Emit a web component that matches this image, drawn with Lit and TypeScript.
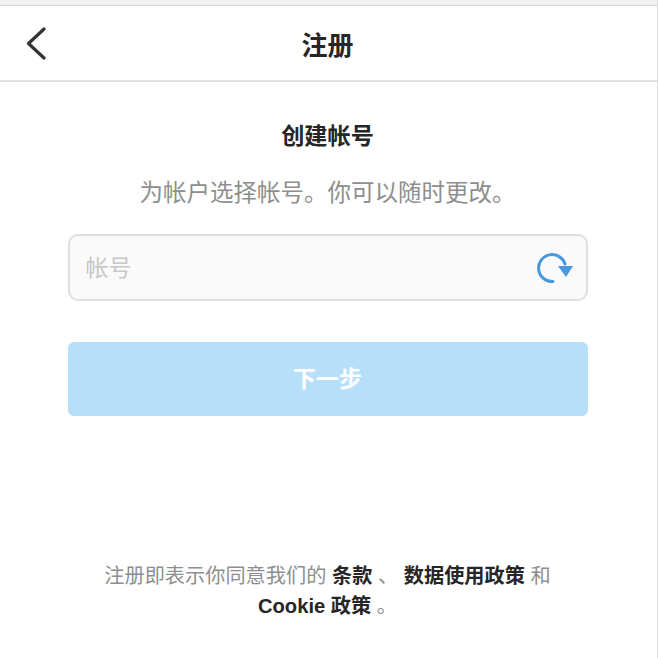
import { LitElement, html, css } from "lit";
import { customElement } from "lit/decorators.js";

@customElement("app-root")
export class AppRoot extends LitElement {
  static styles = css`
    :host {
      display: block;
      width: 658px;
      height: 658px;
      box-sizing: border-box;
      overflow: hidden;
      background: #fff;
      border-right: 1px solid #dedede;
      font-family: "Liberation Sans", "Noto Sans CJK SC", sans-serif;
    }

    .chrome {
      height: 5px;
      background: #f1f1f1;
      border-bottom: 1px solid #d8d8d8;
    }

    .header {
      display: flex;
      align-items: center;
      justify-content: center;
      height: 74px;
      padding-right: 2px;
      border-bottom: 2px solid #e0e0e0;
      position: relative;
    }

    .back {
      position: absolute;
      left: 26px;
      top: 20px;
      width: 20px;
      height: 34px;
    }

    .header h1 {
      margin: 0;
      padding-top: 5px;
      font-size: 26px;
      font-weight: 700;
      color: #262626;
      line-height: 32px;
    }

    .main {
      display: flex;
      flex-direction: column;
      align-items: center;
      padding: 39px 69.5px 0 67.5px;
    }

    .main h2 {
      margin: 0;
      font-size: 23.2px;
      font-weight: 700;
      line-height: 30px;
      color: #262626;
    }

    .hint {
      margin: 27px 0 0;
      font-size: 23.5px;
      line-height: 30px;
      color: #8e8e8e;
    }

    .field {
      align-self: stretch;
      display: flex;
      align-items: center;
      justify-content: space-between;
      box-sizing: border-box;
      height: 67px;
      margin-top: 26px;
      padding: 0 12px 0 16px;
      background: #fafafa;
      border: 2px solid #dfdfdf;
      border-radius: 10px;
      font-size: 23px;
      color: #c7c7c7;
    }

    .field span {
      padding-bottom: 3px;
    }

    .field svg {
      width: 38px;
      height: 34px;
    }

    .next {
      align-self: stretch;
      display: flex;
      align-items: center;
      justify-content: center;
      box-sizing: border-box;
      height: 74px;
      margin-top: 41px;
      padding-bottom: 5px;
      background: #b8dff9;
      border-radius: 6px;
      font-size: 23px;
      font-weight: 700;
      color: #fff;
    }

    .terms {
      margin: 145px 0 0;
      width: 480px;
      text-align: center;
      font-size: 20.2px;
      line-height: 30px;
      color: #8e8e8e;
    }

    .terms b {
      color: #262626;
      font-weight: 700;
    }
  `;

  render() {
    return html`
      <div class="chrome"></div>
      <header class="header">
        <svg class="back" viewBox="0 0 20 34" fill="none">
          <path d="M18 3 L2.5 17.5 L18 32" stroke="#333" stroke-width="3.2" stroke-linecap="round" stroke-linejoin="round" />
        </svg>
        <h1>注册</h1>
      </header>
      <section class="main">
        <h2>创建帐号</h2>
        <p class="hint">为帐户选择帐号。你可以随时更改。</p>
        <div class="field">
          <span>帐号</span>
          <svg viewBox="0 0 38 34" fill="none">
            <path d="M29 13 A13.5 13.5 0 1 0 17 30.5" stroke="#4a98dc" stroke-width="3" stroke-linecap="round" />
            <path d="M22 15 L37 15 L30 26 Z" fill="#4a98dc" />
          </svg>
        </div>
        <div class="next">下一步</div>
        <p class="terms">注册即表示你同意我们的 <b>条款</b> 、 <b>数据使用政策</b> 和 <b>Cookie 政策</b> 。</p>
      </section>
    `;
  }
}
